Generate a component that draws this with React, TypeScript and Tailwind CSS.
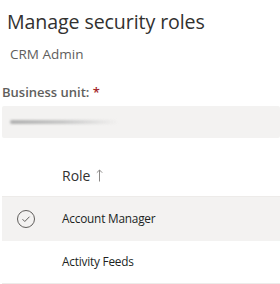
import React from 'react';

const font = { fontFamily: '"Open Sans", "Noto Sans", sans-serif' };

export default function App() {
  return (
    <div className="w-[280px] h-[284px] bg-white overflow-hidden text-[#323130]" style={font}>
      {/* Header */}
      <div className="pl-[7px] pt-[8px]">
        <h1 className="text-[19.6px] leading-[28px] font-normal tracking-[-0.1px]">Manage security roles</h1>
        <div className="pl-[3px] mt-[9px] text-[13.5px] leading-[18px] text-[#605e5c]">CRM Admin</div>
      </div>

      {/* Business unit */}
      <div className="pl-[2px] mt-[20px]">
        <div className="text-[13px] leading-[18px] font-semibold text-[#605e5c]">
          Business unit: <span className="text-[#a4262c]">*</span>
        </div>
        <div className="mt-[5px] h-[32px] bg-[#f3f2f1] rounded-[2px] flex items-center pl-[8px]">
          <div className="w-[108px] h-[4px] rounded-full bg-gradient-to-r from-[#b0b0b0] via-[#c8c8c8] to-transparent blur-[1px]" />
        </div>
      </div>

      {/* Grid */}
      <div className="ml-[2px] mt-[16px]">
        <div className="h-[43px] flex items-center border-b border-[#edebe9] pl-[60px] text-[14px]">
          <span>Role</span>
          <svg className="ml-[6px]" width="7" height="13" viewBox="0 0 7 13" fill="none">
            <path d="M3.5 12.5V1M0.8 3.7L3.5 1l2.7 2.7" stroke="#8a8886" strokeWidth="1" />
          </svg>
        </div>
        <div className="h-[44px] flex items-center bg-[#f3f2f1] text-[11.8px] text-[#201f1e]">
          <div className="w-[48px] flex justify-center">
            <svg width="20" height="20" viewBox="0 0 20 20" fill="none">
              <circle cx="10" cy="10" r="8.5" stroke="#605e5c" strokeWidth="1" />
              <path d="M6.5 10.2l2.3 2.3 4.7-4.8" stroke="#605e5c" strokeWidth="1" />
            </svg>
          </div>
          <span className="ml-[12px] tracking-[-0.2px]">Account Manager</span>
        </div>
        <div className="h-[43px] flex items-center border-b border-[#edebe9] pl-[60px] text-[11.8px] text-[#201f1e] tracking-[-0.2px]">
          Activity Feeds
        </div>
      </div>
    </div>
  );
}
